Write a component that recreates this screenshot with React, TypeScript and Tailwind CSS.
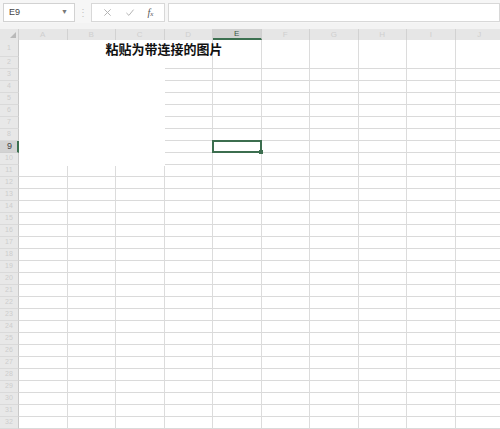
const COLS = ["A", "B", "C", "D", "E", "F", "G", "H", "I", "J"];
const ROWS = Array.from({ length: 32 }, (_, i) => i + 1);

function TopBar() {
  return (
    <div className="flex h-[23px] items-center gap-0 bg-[#f6f6f6] pl-[3px] pt-[2px]">
      <div className="flex h-[19px] w-[72px] items-center justify-between border border-[#d2d2d2] bg-white pl-[5px] pr-[6px] text-[9px] text-[#444]">
        <span>E9</span>
        <span className="text-[7px] text-[#777]">▼</span>
      </div>
      <div className="flex w-[16px] justify-center text-[10px] leading-none text-[#c4c4c4]">⋮</div>
      <div className="flex h-[19px] w-[74px] items-center justify-around border border-[#d8d8d8] bg-white px-[4px] text-[#b3b3b3]">
        <svg width="9" height="9" viewBox="0 0 10 10">
          <path d="M1.5 1.5 8.5 8.5M8.5 1.5 1.5 8.5" stroke="currentColor" strokeWidth="1.1" fill="none" />
        </svg>
        <svg width="10" height="9" viewBox="0 0 10 10">
          <path d="M1 5.5 3.8 8.2 9 1.8" stroke="currentColor" strokeWidth="1.1" fill="none" />
        </svg>
        <span className="font-['Liberation_Serif',serif] text-[10px] italic text-[#555]">
          f<span className="text-[7px]">x</span>
        </span>
      </div>
      <div className="ml-[3px] h-[19px] flex-1 border border-[#d8d8d8] bg-white" />
    </div>
  );
}

function ColumnHeader() {
  return (
    <div className="flex h-[11px] bg-[#e6e6e6]">
      <div className="relative w-[19px] shrink-0 border-r border-[#cfcfcf]">
        <div className="absolute bottom-[2px] right-[2px] h-0 w-0 border-b-[6px] border-l-[6px] border-b-[#b9b9b9] border-l-transparent" />
      </div>
      {COLS.map((c) =>
        c === "E" ? (
          <div
            key={c}
            className="flex w-[48.5px] shrink-0 items-center justify-center border-b-2 border-r border-b-[#3c7050] border-r-[#cfcfcf] bg-[#d3d3d3] pt-[1px] text-[8px] text-[#3c5a48]"
          >
            {c}
          </div>
        ) : (
          <div
            key={c}
            className="flex w-[48.5px] shrink-0 items-center justify-center border-r border-[#d2d2d2] text-[8px] text-[#cfcfcf]"
          >
            {c}
          </div>
        )
      )}
    </div>
  );
}

function Row({ n }: { n: number }) {
  const selected = n === 9;
  return (
    <div className={`flex ${n === 1 ? "h-[17px]" : "h-[12px]"}`}>
      <div
        className={
          selected
            ? "flex w-[19px] shrink-0 items-center justify-end border-b border-r-2 border-b-[#cfcfcf] border-r-[#3c7050] bg-[#d3d3d3] pr-[5px] text-[9px] text-[#444]"
            : "flex w-[19px] shrink-0 items-center justify-center border-b border-r border-b-[#dadada] border-r-[#c8c8c8] bg-[#e8e8e8] text-[7px] text-[#cdcdcd]"
        }
      >
        {n}
      </div>
      {COLS.map((c) => (
        <div
          key={c}
          className={`relative w-[48.5px] shrink-0 border-r border-[#dcdcdc] ${
            n === 1 ? "" : "border-b border-b-[#dadada]"
          }`}
        >
          {n === 1 && c === "B" && (
            <span className="absolute left-[38px] top-[1px] z-10 whitespace-nowrap font-['Noto_Sans_CJK_SC',sans-serif] text-[13px] font-bold leading-[15px] text-[#111]">
              粘贴为带连接的图片
            </span>
          )}
          {selected && c === "E" && (
            <div className="absolute -left-px -top-px z-10 h-[13px] w-[50px] border-2 border-[#3c6e4f]">
              <div className="absolute -bottom-[3px] -right-[3px] h-[4px] w-[4px] bg-[#3c6e4f]" />
            </div>
          )}
        </div>
      ))}
    </div>
  );
}

export default function App() {
  return (
    <div className="h-[429px] w-[500px] overflow-hidden bg-white font-['Liberation_Sans',sans-serif]">
      <TopBar />
      <div className="h-[6px] bg-[#f3f3f3]" />
      <ColumnHeader />
      <div className="relative">
        {ROWS.map((n) => (
          <Row key={n} n={n} />
        ))}
        {/* pasted picture covering A1:C10 */}
        <div className="absolute left-[19px] top-0 h-[126px] w-[146px] bg-white" />
      </div>
    </div>
  );
}
